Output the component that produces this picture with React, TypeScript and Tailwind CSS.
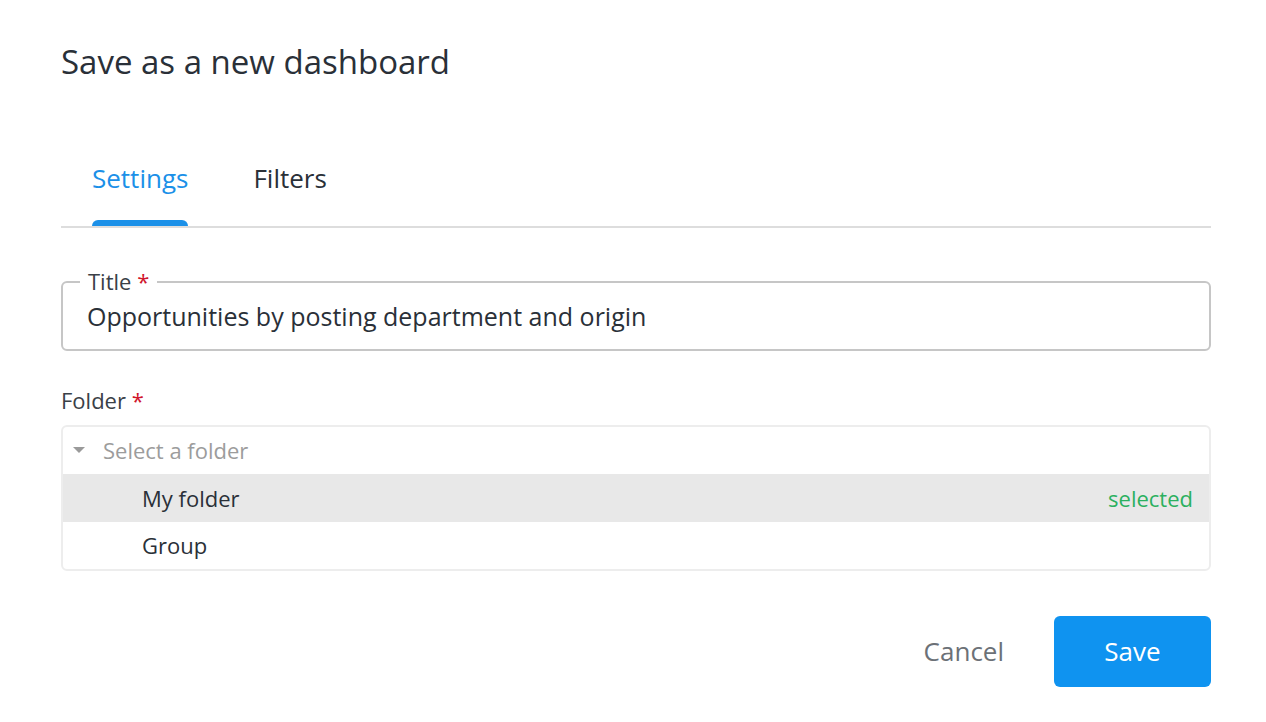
import React from 'react';

function App() {
  const font = { fontFamily: '"Open Sans", "Noto Sans", sans-serif' };
  return (
    <div className="h-[722px] w-full bg-white pl-[61px] pr-[55px] text-[#2b3138]" style={font}>
      {/* Heading */}
      <h1 className="pt-[42px] text-[33px] leading-[40px] font-normal text-[#2a3038]">
        Save as a new dashboard
      </h1>

      {/* Tabs */}
      <div className="mt-[78px] flex gap-[65px] border-b-2 border-[#dddddd] pl-[31px]">
        <div className="flex flex-col">
          <span className="text-[26px] leading-[36px] text-[#1b90e8]">Settings</span>
          <div className="mt-[24px] h-[6px] rounded-t-md bg-[#1b90e8]" />
        </div>
        <div className="flex flex-col">
          <span className="text-[26px] leading-[36px] text-[#2a3038]">Filters</span>
        </div>
      </div>

      {/* Title field */}
      <div className="relative mt-[53px] flex h-[70px] items-end rounded-md border-2 border-[#c6c6c6] px-[24px] pb-[16px]">
        <span className="absolute -top-[15px] left-[17px] bg-white px-[8px] text-[22px] leading-[26px] text-[#3a4047]">
          Title <span className="text-[#d0142c]">*</span>
        </span>
        <span className="text-[25px] leading-[34px] text-[#2a3038]">
          Opportunities by posting department and origin
        </span>
      </div>

      {/* Folder */}
      <div className="mt-[36px] text-[22px] leading-[26px] text-[#3a4047]">
        Folder <span className="text-[#d0142c]">*</span>
      </div>
      <div className="mt-[12px] overflow-hidden rounded-md border-2 border-[#ededed]">
        <div className="flex h-[47px] items-center">
          <svg width="12" height="7" viewBox="0 0 12 7" className="ml-[10px]">
            <path d="M0 0h12L6 6z" fill="#9a9a9a" />
          </svg>
          <span className="ml-[18px] text-[22px] text-[#9c9c9c]">Select a folder</span>
        </div>
        <div className="flex h-[48px] items-center justify-between bg-[#e8e8e8] pl-[79px] pr-[16px]">
          <span className="text-[22px] text-[#2a3038]">My folder</span>
          <span className="text-[22px] text-[#2bb05f]">selected</span>
        </div>
        <div className="flex h-[47px] items-center pl-[79px]">
          <span className="text-[22px] text-[#2a3038]">Group</span>
        </div>
      </div>

      {/* Actions */}
      <div className="mt-[45px] flex items-center justify-end gap-[50px]">
        <button className="text-[26px] text-[#6c7177]">Cancel</button>
        <button className="h-[71px] w-[157px] rounded-md bg-[#0f93f0] text-[26px] font-medium text-white">
          Save
        </button>
      </div>
    </div>
  );
}

export default App;
